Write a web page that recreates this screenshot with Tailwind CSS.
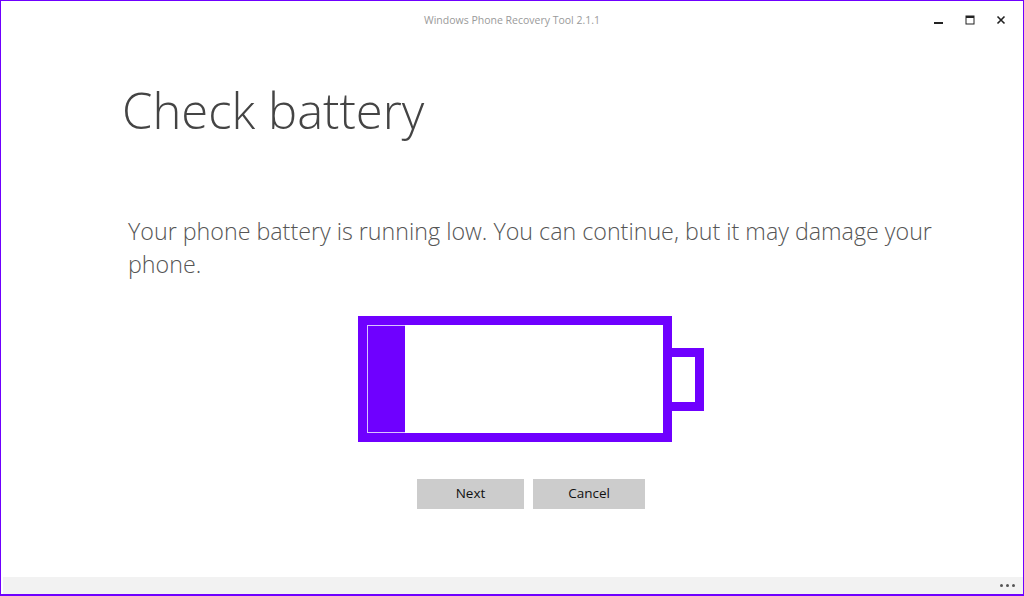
<!DOCTYPE html>
<html lang="en">
<head>
  <meta charset="UTF-8" />
  <title>Windows Phone Recovery Tool</title>
  <script src="https://cdn.jsdelivr.net/npm/@tailwindcss/browser@4"></script>
</head>
<body class="bg-white overflow-hidden font-['Open_Sans',sans-serif]">

<div class="w-[1024px] h-[596px] flex flex-col border-l border-r border-t-[1px] border-b-2 border-[#6f00ff] bg-white">
  <!-- title bar -->
  <div class="h-[37px] shrink-0 relative flex justify-center pt-[11px]">
    <div class="text-[10.5px] leading-[16px] text-[#9a9a9a]">Windows Phone Recovery Tool 2.1.1</div>
    <div class="absolute right-[17px] top-[14px] flex items-center gap-[21px]">
      <svg width="10" height="10" viewBox="0 0 10 10"><rect x="0" y="7" width="9" height="2" fill="#222"/></svg>
      <svg width="10" height="10" viewBox="0 0 10 10"><rect x="1" y="1" width="8" height="8" fill="none" stroke="#222" stroke-width="1"/><rect x="1" y="1" width="8" height="2" fill="#222"/></svg>
      <svg width="10" height="10" viewBox="0 0 10 10"><path d="M1.5 1.5 L8.5 8.5 M8.5 1.5 L1.5 8.5" stroke="#222" stroke-width="1.6" fill="none"/></svg>
    </div>
  </div>

  <!-- content -->
  <div class="flex-1 flex flex-col">
    <h1 class="ml-[121px] mt-[36px] text-[49px] leading-[72px] font-light text-[#444]">Check battery</h1>
    <p class="ml-[127px] mt-[69px] w-[830px] text-[23.25px] leading-[33px] font-light text-[#555]">Your phone battery is running low. You can continue, but it may damage your phone.</p>

    <div class="ml-[357px] mt-[35px] flex items-center">
      <div class="w-[314px] h-[126px] border-[9px] border-[#6f00ff] bg-white">
        <div class="w-[38px] h-full bg-[#6f00ff] border border-[#d9c4ff] border-r-0"></div>
      </div>
      <div class="w-[32px] h-[63px] border-[9px] border-l-0 border-[#6f00ff] bg-white"></div>
    </div>

    <div class="ml-[416px] mt-[37px] flex gap-[9px]">
      <button class="w-[107px] h-[30px] pb-px bg-[#cccccc] text-[13.5px] font-normal text-[#111]">Next</button>
      <button class="w-[112px] h-[30px] pb-px bg-[#cccccc] text-[13.5px] font-normal text-[#111]">Cancel</button>
    </div>
  </div>

  <!-- bottom bar -->
  <div class="h-[17px] shrink-0 ml-[2px] bg-[#f2f2f2] flex items-center justify-end gap-[3px] pr-[8px]">
    <span class="w-[3px] h-[3px] rounded-full bg-[#555]"></span>
    <span class="w-[3px] h-[3px] rounded-full bg-[#555]"></span>
    <span class="w-[3px] h-[3px] rounded-full bg-[#555]"></span>
  </div>
</div>

</body>
</html>
